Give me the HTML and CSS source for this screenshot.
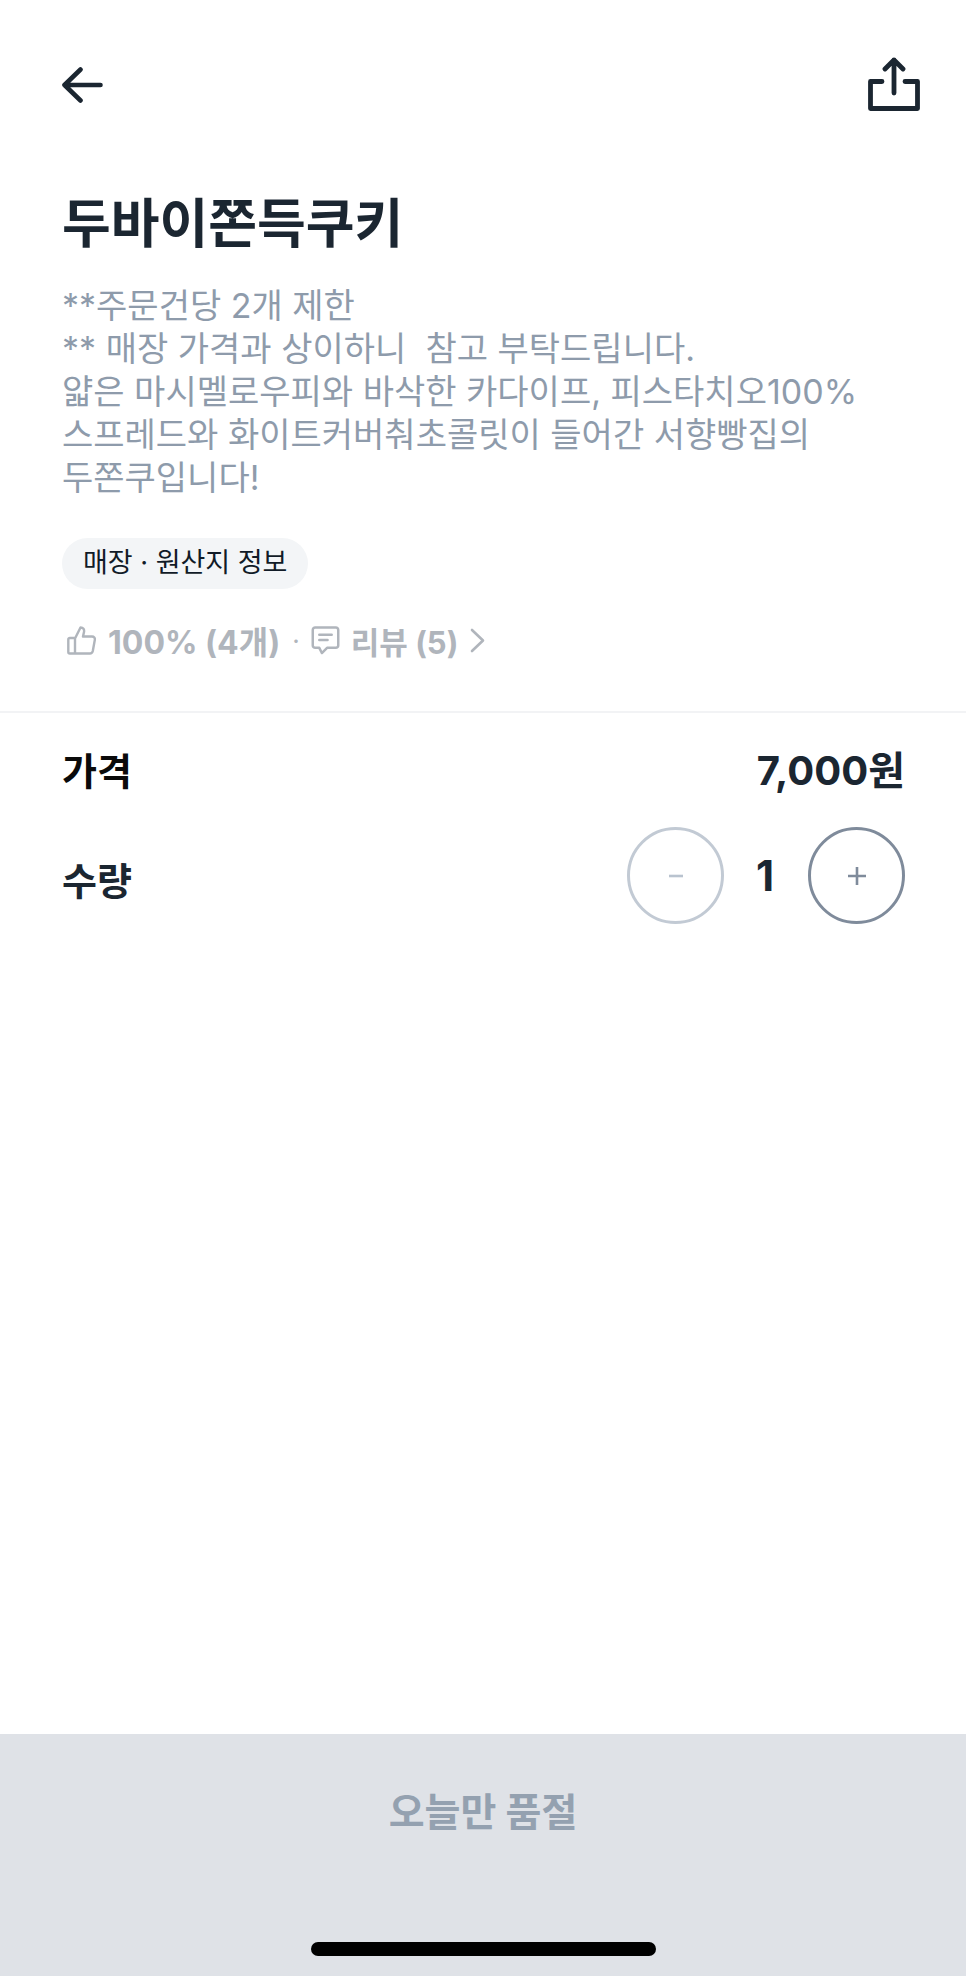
FILE: index.html
```html
<!DOCTYPE html>
<html lang="ko">
<head>
  <meta charset="utf-8" />
  <title>두바이쫀득쿠키</title>
  <link rel="stylesheet" href="styles.css">
</head>
<body>
  <div class="page">
    <header class="topbar">
      <svg class="icon-back" width="41" height="36" viewBox="0 0 41 36" fill="none" stroke="#1b2631" stroke-width="4.6" stroke-linecap="round" stroke-linejoin="round">
        <path d="M38.500 18H2.500M18.500 2.500L2.500 18l16 15.500" />
      </svg>
      <svg class="icon-share" width="52" height="54" viewBox="0 0 52 54" fill="none" stroke="#1b2631" stroke-width="4.800" stroke-linecap="round" stroke-linejoin="round">
        <path d="M26 36V3M17 12l9-9 9 9" />
        <path d="M14 24.500H2.500v27h47v-27H37" />
      </svg>
    </header>

    <section class="info">
      <h1 class="title">두바이쫀득쿠키</h1>
      <p class="desc">**주문건당 2개 제한<br>** 매장 가격과 상이하니&nbsp; 참고 부탁드립니다.<br>얇은 마시멜로우피와 바삭한 카다이프, 피스타치오100%<br>스프레드와 화이트커버춰초콜릿이 들어간 서향빵집의<br>두쫀쿠입니다!</p>
      <div class="chip">매장 · 원산지 정보</div>
      <div class="meta">
        <svg class="meta-thumb" width="29" height="29" viewBox="0 0 29 29" fill="none" stroke="#b0b5bc" stroke-width="2.400" stroke-linecap="round" stroke-linejoin="round">
          <path d="M8 27.500H2.800a1.500 1.500 0 0 1-1.500-1.500V13.500A1.500 1.500 0 0 1 2.800 12H8zM8 12.500L13.500 1.500c2.800 0 4 2 3.500 4.500L16 10.500h9c2 0 3.200 1.500 2.800 3.500l-2 11c-.4 1.600-1.400 2.500-2.800 2.500H8" />
        </svg>
        <span class="meta-text">100% (4개)</span>
        <span class="meta-dot">·</span>
        <svg class="meta-chat" width="29" height="29" viewBox="0 0 27 28" fill="none" stroke="#b0b5bc" stroke-width="2.400" stroke-linecap="round" stroke-linejoin="round">
          <path d="M3.500 1.500h20a2.300 2.300 0 0 1 2.300 2.300v15a2.300 2.300 0 0 1-2.300 2.300H15l-5 5-2.500-5h-4a2.300 2.300 0 0 1-2.300-2.300v-15a2.300 2.300 0 0 1 2.300-2.300z" />
          <path d="M7.500 8.500h12M7.500 13.500h8" />
        </svg>
        <span class="meta-text meta-review">리뷰 (5)</span>
        <svg class="meta-arrow" width="15" height="25" viewBox="0 0 15 25" fill="none" stroke="#b0b5bc" stroke-width="2.600" stroke-linecap="round" stroke-linejoin="round">
          <path d="M2 2l11 10.500L2 23" />
        </svg>
      </div>
    </section>

    <section class="order">
      <div class="row row-price">
        <span class="label label-black">가격</span>
        <span class="price">7,000원</span>
      </div>
      <div class="row row-qty">
        <span class="label label-qty">수량</span>
        <div class="stepper">
          <div class="step step-off"><svg width="16" height="16" viewBox="0 0 16 16" stroke="#b9c3cf" stroke-width="2.600"><path d="M1 8h14" /></svg></div>
          <span class="count">1</span>
          <div class="step"><svg width="20" height="20" viewBox="0 0 20 20" stroke="#7f8b9b" stroke-width="2.600"><path d="M1 10h18M10 1v18" /></svg></div>
        </div>
      </div>
    </section>

    <footer class="bottom">
      <div class="soldout">오늘만 품절</div>
      <div class="homebar"></div>
    </footer>
  </div>
</body>
</html>
```

FILE: styles.css
```css
* {
  box-sizing: border-box;
}

body {
  margin: 0;
  background: #fff;
  font-family: Inter, "Noto Sans CJK KR", "Noto Sans", sans-serif;
  color: #1b2631;
}

.page {
  display: flex;
  flex-direction: column;
  height: 1976px;
}

.topbar {
  display: flex;
  justify-content: space-between;
  align-items: flex-start;
  padding: 57px 46px 0 62px;
  height: 188px;
}

.icon-back {
  margin-top: 10px;
}

.info {
  padding: 0 62px;
  border-bottom: 2px solid #f2f3f5;
  height: 525px;
}

.title {
  margin: 0;
  font-size: 53px;
  line-height: 72px;
  font-weight: 700;
  letter-spacing: 0;
}

.desc {
  margin: 24px 0 0;
  font-size: 34px;
  line-height: 43px;
  color: #8e9bab;
  white-space: nowrap;
}

.chip {
  display: inline-block;
  margin-top: 39px;
  padding: 0 21px;
  height: 51px;
  line-height: 50px;
  border-radius: 26px;
  background: #f3f5f7;
  color: #111b27;
  font-size: 27px;
}

.meta {
  display: flex;
  align-items: center;
  margin-top: 31px;
  padding-left: 5px;
  height: 40px;
  color: #b0b5bc;
}

.meta-text {
  font-size: 32px;
  font-weight: 700;
}

.meta-review {
  font-size: 31px;
}

.meta-thumb {
  margin-right: 12px;
}

.meta-dot {
  font-size: 26px;
  padding: 0 11px 0 12px;
}

.meta-chat {
  margin-right: 11px;
}

.meta-arrow {
  margin-left: 12px;
}

.order {
  padding: 0 61px 0 62px;
}

.row {
  display: flex;
  justify-content: space-between;
  align-items: center;
}

.row-price {
  height: 110px;
}

.row-qty {
  margin-top: 4px;
  height: 97px;
}

.label {
  font-size: 38px;
  font-weight: 700;
}

.label-black {
  color: #0a0a0a;
}

.label-qty {
  padding-top: 6px;
}

.price {
  font-size: 40px;
  font-weight: 700;
}

.stepper {
  display: flex;
  align-items: center;
}

.step {
  display: flex;
  justify-content: center;
  align-items: center;
  width: 97px;
  height: 97px;
  border: 3px solid #7f8b9b;
  border-radius: 50%;
}

.step-off {
  border-color: #c2cad4;
}

.count {
  width: 84px;
  padding-right: 2px;
  text-align: center;
  font-size: 42px;
  font-weight: 700;
}

.bottom {
  margin-top: auto;
  height: 242px;
  background: #dfe2e7;
  display: flex;
  flex-direction: column;
  align-items: center;
}

.soldout {
  margin-top: 50px;
  font-size: 39px;
  line-height: 56px;
  font-weight: 700;
  color: #94a1b0;
}

.homebar {
  margin-top: 102px;
  width: 345px;
  height: 14px;
  border-radius: 7px;
  background: #000;
}
```
